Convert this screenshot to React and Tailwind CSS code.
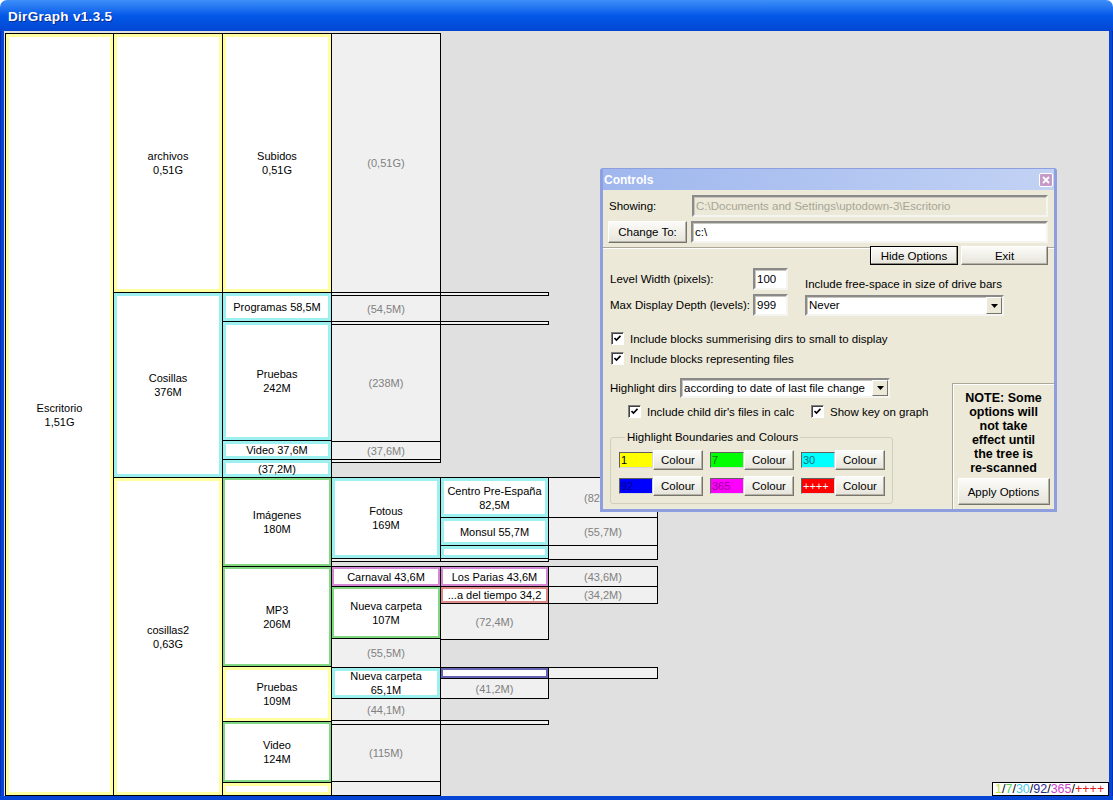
import React from "react";

// column edges of the graph (page x), level width 100px + borders
const X = [5, 113, 222, 331, 440, 548, 657];

const RING = {
  y: "bg-white text-black shadow-[inset_0_0_0_3px_#ffffa0]",
  c: "bg-white text-black shadow-[inset_0_0_0_3px_#9cf0f0]",
  g: "bg-white text-black shadow-[inset_0_0_0_2px_#80d880]",
  m: "bg-white text-black shadow-[inset_0_0_0_2px_#d488d4]",
  r: "bg-white text-black shadow-[inset_0_0_0_2px_#e08888]",
  b: "bg-white text-black shadow-[inset_0_0_0_2px_#6464b4]",
  f: "bg-[#f0f0f0] text-[#808080]",
};

// [column, top, bottom, kind, lines]
const blocks = [
  [0, 33, 795, "y", ["Escritorio", "1,51G"]],
  [1, 33, 292, "y", ["archivos", "0,51G"]],
  [1, 292, 477, "c", ["Cosillas", "376M"]],
  [1, 477, 795, "y", ["cosillas2", "0,63G"]],
  [2, 33, 292, "y", ["Subidos", "0,51G"]],
  [2, 292, 321, "c", ["Programas 58,5M"]],
  [2, 321, 440, "c", ["Pruebas", "242M"]],
  [2, 440, 459, "c", ["Video 37,6M"]],
  [2, 459, 477, "c", ["(37,2M)"]],
  [2, 477, 566, "g", ["Imágenes", "180M"]],
  [2, 566, 666, "g", ["MP3", "206M"]],
  [2, 666, 721, "y", ["Pruebas", "109M"]],
  [2, 721, 782, "g", ["Video", "124M"]],
  [2, 782, 795, "y", []],
  [3, 33, 292, "f", ["(0,51G)"]],
  [3, 292, 295, "f", []],
  [3, 295, 321, "f", ["(54,5M)"]],
  [3, 321, 324, "f", []],
  [3, 324, 441, "f", ["(238M)"]],
  [3, 441, 459, "f", ["(37,6M)"]],
  [3, 459, 462, "f", []],
  [3, 477, 558, "c", ["Fotous", "169M"]],
  [3, 558, 561, "f", []],
  [3, 566, 586, "m", ["Carnaval 43,6M"]],
  [3, 586, 638, "g", ["Nueva carpeta", "107M"]],
  [3, 638, 667, "f", ["(55,5M)"]],
  [3, 667, 698, "c", ["Nueva carpeta", "65,1M"]],
  [3, 698, 720, "f", ["(44,1M)"]],
  [3, 720, 724, "f", []],
  [3, 724, 781, "f", ["(115M)"]],
  [3, 781, 795, "f", []],
  [4, 292, 295, "f", []],
  [4, 321, 324, "f", []],
  [4, 477, 517, "c", ["Centro Pre-España", "82,5M"]],
  [4, 517, 545, "c", ["Monsul 55,7M"]],
  [4, 545, 558, "c", []],
  [4, 558, 561, "f", []],
  [4, 566, 586, "m", ["Los Parias 43,6M"]],
  [4, 586, 603, "r", ["...a del tiempo 34,2"]],
  [4, 603, 639, "f", ["(72,4M)"]],
  [4, 667, 678, "b", []],
  [4, 678, 698, "f", ["(41,2M)"]],
  [4, 720, 724, "f", []],
  [5, 477, 517, "f", ["(82,5M)"]],
  [5, 517, 545, "f", ["(55,7M)"]],
  [5, 545, 559, "f", []],
  [5, 566, 586, "f", ["(43,6M)"]],
  [5, 586, 603, "f", ["(34,2M)"]],
  [5, 667, 678, "f", []],
];

function Block({ b }) {
  const [c, y0, y1, kind, lines] = b;
  return (
    <div
      className={`absolute flex flex-col items-center justify-center overflow-hidden whitespace-nowrap border border-black text-center text-[11px] leading-[14px] ${RING[kind]}`}
      style={{ left: X[c] - 4, top: y0 - 31, width: X[c + 1] - X[c] + 1, height: y1 - y0 + 1 }}
    >
      {lines.map((l) => (
        <span key={l}>{l}</span>
      ))}
    </div>
  );
}

const sunken =
  "border-2 border-t-[#8a8a8a] border-l-[#8a8a8a] border-b-[#f4f4f0] border-r-[#f4f4f0] shadow-[inset_1px_1px_0_#c8c6bc]";

function Btn({ className = "", children, focused }) {
  return (
    <div
      className={`flex items-center justify-center bg-gradient-to-b from-[#fbfbf8] to-[#e6e4da] ${
        focused
          ? "border border-black shadow-[inset_-1px_-1px_0_#8e8c82,inset_1px_1px_0_#ffffff]"
          : "border border-t-white border-l-white border-b-[#77756b] border-r-[#77756b] shadow-[inset_-1px_-1px_0_#b5b3a8]"
      } ${className}`}
    >
      {children}
    </div>
  );
}

function Arrow() {
  return (
    <div className="flex w-[16px] items-center justify-center self-stretch border border-t-white border-l-white border-b-[#77756b] border-r-[#77756b] bg-[#ece9d8]">
      <svg width="7" height="4" viewBox="0 0 7 4">
        <path d="M0 0h7L3.5 4z" fill="#000" />
      </svg>
    </div>
  );
}

function Select({ className = "", children }) {
  return (
    <div className={`flex bg-white ${sunken} ${className}`}>
      <span className="flex-1 pl-[2px] leading-[16px] whitespace-nowrap">{children}</span>
      <Arrow />
    </div>
  );
}

function Check({ className = "", children }) {
  return (
    <div className={`flex items-center ${className}`}>
      <div className="flex h-[13px] w-[13px] items-center justify-center bg-white border border-t-[#808080] border-l-[#808080] border-b-white border-r-white shadow-[inset_1px_1px_0_#404040]">
        <svg width="7" height="7" viewBox="0 0 7 7">
          <path d="M0.5 3l2 2 4-4.2" stroke="#000" strokeWidth="1.6" fill="none" />
        </svg>
      </div>
      <span className="ml-[6px] whitespace-nowrap">{children}</span>
    </div>
  );
}

function Swatch({ bg, fg, text }) {
  return (
    <div className="flex items-center">
      <div className={`flex h-[16px] w-[34px] items-center pl-[1px] text-[11px] leading-[12px] ${bg} ${fg} border border-t-[#606060] border-l-[#606060] border-b-[#d8d8d8] border-r-[#d8d8d8]`}>
        {text}
      </div>
      <Btn className="h-[20px] w-[50px]">Colour</Btn>
    </div>
  );
}

function Controls() {
  return (
    <div className="absolute left-[596px] top-[137px] flex h-[344px] w-[457px] flex-col rounded-t-[3px] border-x-[3px] border-b-[3px] border-t border-[#8e9fe0] bg-[#ece9d8] text-[11.5px] leading-[14px] text-black">
      <div className="flex h-[21px] items-center bg-gradient-to-r from-[#9fb7ee] to-[#c2d2f4] pl-[1px] pr-[1px]">
        <span className="text-[12px] font-bold text-white">Controls</span>
        <div className="ml-auto flex h-[14px] w-[14px] items-center justify-center rounded-[2px] border border-white bg-[#c59ac6]">
          <svg width="8" height="8" viewBox="0 0 8 8">
            <path d="M1 1l6 6M7 1l-6 6" stroke="#fff" strokeWidth="1.8" />
          </svg>
        </div>
      </div>

      <div className="flex flex-1 flex-col pl-[6px] pr-[6px] pt-[5px]">
        <div className="flex h-[22px] items-center">
          <span className="w-[83px]">Showing:</span>
          <div className={`flex h-[22px] flex-1 items-center pl-[2px] text-[#a7a596] bg-[#ece9d8] ${sunken}`}>
            C:\Documents and Settings\uptodown-3\Escritorio
          </div>
        </div>
        <div className="mt-[4px] flex h-[22px] items-center">
          <Btn className="-ml-[1px] h-[22px] w-[79px]">Change To:</Btn>
          <div className={`ml-[4px] flex h-[22px] flex-1 items-center bg-white pl-[2px] ${sunken}`}>c:\</div>
        </div>
        <div className="-mx-[6px] mt-[3px] flex h-[19px] items-start">
          <div className="mt-[1px] flex-1 border-t border-b border-t-[#aca899] border-b-white" />
          <Btn focused className="h-[19px] w-[88px]">Hide Options</Btn>
          <Btn className="ml-[3px] h-[19px] w-[87px]">Exit</Btn>
          <div className="mt-[1px] w-[6px] border-t border-b border-t-[#aca899] border-b-white" />
        </div>

        <div className="mt-[3px] flex">
          <div className="flex flex-col gap-[4px]">
            <div className="flex h-[22px] items-center">
              <span className="w-[144px] pl-[1px]">Level Width (pixels):</span>
              <div className={`flex h-[22px] w-[35px] items-center bg-white pl-[2px] ${sunken}`}>100</div>
            </div>
            <div className="flex h-[22px] items-center">
              <span className="w-[144px] pl-[1px] whitespace-nowrap">Max Display Depth (levels):</span>
              <div className={`flex h-[22px] w-[35px] items-center bg-white pl-[2px] ${sunken}`}>999</div>
            </div>
          </div>
          <div className="ml-[17px] flex flex-col pt-[9px]">
            <span className="whitespace-nowrap">Include free-space in size of drive bars</span>
            <Select className="mt-[4px] h-[21px] w-[199px]">Never</Select>
          </div>
        </div>

        <Check className="ml-[2px] mt-[16px] h-[13px]">Include blocks summerising dirs to small to display</Check>
        <Check className="ml-[2px] mt-[7px] h-[13px]">Include blocks representing files</Check>

        <div className="mt-[13px] flex flex-1">
          <div className="flex flex-1 flex-col">
            <div className="flex h-[20px] items-center">
              <span className="w-[71px] pl-[1px]">Highlight dirs</span>
              <Select className="h-[20px] w-[210px]">according to date of last file change</Select>
            </div>
            <div className="ml-[19px] mt-[7px] flex h-[13px]">
              <Check className="w-[183px]">Include child dir's files in calc</Check>
              <Check>Show key on graph</Check>
            </div>
            <fieldset className="ml-[1px] mt-[12px] w-[283px] rounded-[3px] border border-[#d0d0bf] pb-[7px] pl-[8px]">
              <legend className="ml-[6px] px-[2px] leading-[14px]">Highlight Boundaries and Colours</legend>
              <div className="mt-[6px] flex gap-[7px]">
                <Swatch bg="bg-[#ffff00]" fg="text-[#000000]" text="1" />
                <Swatch bg="bg-[#00ff00]" fg="text-[#007000]" text="7" />
                <Swatch bg="bg-[#00ffff]" fg="text-[#007080]" text="30" />
              </div>
              <div className="mt-[6px] flex gap-[7px]">
                <Swatch bg="bg-[#0000ff]" fg="text-[#000080]" text="92" />
                <Swatch bg="bg-[#ff00ff]" fg="text-[#9a009a]" text="365" />
                <Swatch bg="bg-[#ff0000]" fg="text-white" text="++++" />
              </div>
            </fieldset>
          </div>
          <div className="-mr-[6px] mt-[5px] flex w-[102px] flex-col items-center border-l border-t border-[#aca899] pt-[7px] shadow-[inset_1px_1px_0_#ffffff]">
            <p className="text-center text-[12.5px] font-bold leading-[14px]">
              NOTE: Some
              <br />
              options will
              <br />
              not take
              <br />
              effect until
              <br />
              the tree is
              <br />
              re-scanned
            </p>
            <Btn className="mt-[3px] h-[27px] w-[92px]">Apply Options</Btn>
          </div>
        </div>
      </div>
    </div>
  );
}

export default function App() {
  return (
    <div className="flex h-[800px] w-[1113px] flex-col overflow-hidden bg-white font-['Liberation_Sans',Arial,sans-serif]">
      <div className="flex h-[31px] items-center rounded-t-[7px] bg-gradient-to-b from-[#3d8ff9] via-[#0459e8] to-[#0246d2] pl-[8px] pt-[4px]">
        <span className="text-[13.5px] font-bold tracking-[0.3px] text-white [text-shadow:1px_1px_0_#0a2a90]">DirGraph v1.3.5</span>
      </div>
      <div className="flex flex-1 bg-[#0745d6]">
        <div className="w-[4px] border-l border-l-[#0030b0]" />
        <div className="relative flex-1 overflow-hidden bg-[#e0e0e0]">
          {blocks.map((b, i) => (
            <Block key={i} b={b} />
          ))}
          <Controls />
          <div className="absolute bottom-0 right-0 flex h-[14px] w-[117px] items-center border border-black bg-white pl-[2px] text-[12.5px] leading-[12px]">
            <span className="text-[#c8e040]">1</span>
            <span>/</span>
            <span className="text-[#5cd05c]">7</span>
            <span>/</span>
            <span className="text-[#50c8e8]">30</span>
            <span>/</span>
            <span className="text-[#282890]">92</span>
            <span>/</span>
            <span className="text-[#cc44cc]">365</span>
            <span>/</span>
            <span className="text-[#e01818]">++++</span>
          </div>
        </div>
        <div className="w-[4px] border-r border-r-[#0030b0]" />
      </div>
      <div className="h-[4px] bg-[#0745d6]" />
    </div>
  );
}
